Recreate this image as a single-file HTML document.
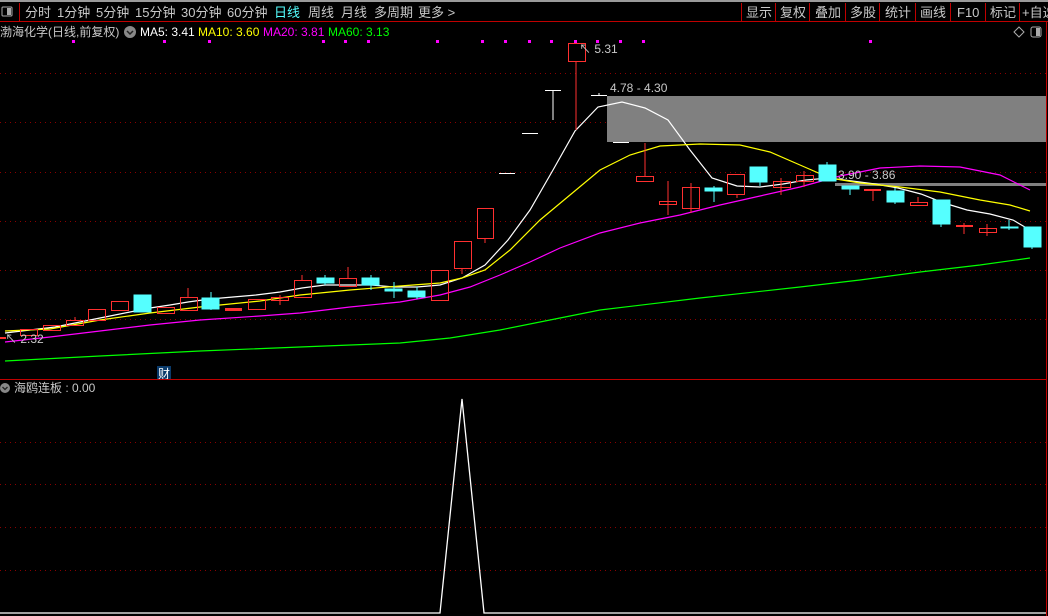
<!DOCTYPE html>
<html><head><meta charset="utf-8"><style>
html,body{margin:0;padding:0;background:#000;width:1048px;height:616px;overflow:hidden}
svg{display:block}
text{font-family:"Liberation Sans","Noto Sans CJK SC",sans-serif}
</style></head><body>
<svg width="1048" height="616" viewBox="0 0 1048 616" xmlns="http://www.w3.org/2000/svg">
<rect width="1048" height="616" fill="#000"/>
<rect x="0" y="0" width="1048" height="2" fill="#9a9a9a"/>
<line x1="0" y1="21.5" x2="1048" y2="21.5" stroke="#c00000"/>
<line x1="19.5" y1="3" x2="19.5" y2="21" stroke="#c00000"/>
<rect x="2" y="7" width="10" height="9" rx="1" fill="none" stroke="#aaa"/><rect x="7" y="8" width="4" height="7" fill="#aaa"/>
<g font-size="13" fill="#c8c8c8">
<text x="25" y="17">分时</text><text x="57" y="17">1分钟</text><text x="96" y="17">5分钟</text><text x="135" y="17">15分钟</text><text x="181" y="17">30分钟</text><text x="227" y="17">60分钟</text><text x="274" y="17" fill="#5ff">日线</text><text x="308" y="17">周线</text><text x="341" y="17">月线</text><text x="374" y="17">多周期</text><text x="418" y="17">更多 &gt;</text>
<text x="746" y="17">显示</text><text x="780" y="17">复权</text><text x="815" y="17">叠加</text><text x="850" y="17">多股</text><text x="885" y="17">统计</text><text x="920" y="17">画线</text><text x="957" y="17">F10</text><text x="990" y="17">标记</text><text x="1022" y="17">+自选</text>
</g>
<g stroke="#c00000"><line x1="741.5" y1="3" x2="741.5" y2="21"/><line x1="775.5" y1="3" x2="775.5" y2="21"/><line x1="809.5" y1="3" x2="809.5" y2="21"/><line x1="845.5" y1="3" x2="845.5" y2="21"/><line x1="879.5" y1="3" x2="879.5" y2="21"/><line x1="915.5" y1="3" x2="915.5" y2="21"/><line x1="950.5" y1="3" x2="950.5" y2="21"/><line x1="985.5" y1="3" x2="985.5" y2="21"/><line x1="1019.5" y1="3" x2="1019.5" y2="21"/><line x1="1046.5" y1="22" x2="1046.5" y2="616"/></g>
<g font-size="12">
<text x="0" y="36" fill="#c8c8c8">渤海化学(日线,前复权)</text>
<circle cx="130" cy="32" r="6" fill="#888"/><path d="M127 31l3 3 3-3" stroke="#222" stroke-width="1.5" fill="none"/>
<text x="140" y="36" fill="#fff">MA5: 3.41</text><text x="198" y="36" fill="#ff0">MA10: 3.60</text><text x="263" y="36" fill="#f0f">MA20: 3.81</text><text x="328" y="36" fill="#0f0">MA60: 3.13</text>
</g>
<path d="M1014 32l5-5 5 5-5 5z" fill="none" stroke="#aaa"/>
<rect x="1031" y="27" width="10" height="10" rx="2" fill="none" stroke="#aaa"/><rect x="1036" y="28" width="4" height="8" fill="#aaa"/>
<g fill="#f0f">
<rect x="72" y="40" width="3" height="3"/><rect x="163" y="40" width="3" height="3"/><rect x="208" y="40" width="3" height="3"/><rect x="322" y="40" width="3" height="3"/><rect x="344" y="40" width="3" height="3"/><rect x="367" y="40" width="3" height="3"/><rect x="436" y="40" width="3" height="3"/><rect x="481" y="40" width="3" height="3"/><rect x="504" y="40" width="3" height="3"/><rect x="528" y="40" width="3" height="3"/><rect x="550" y="40" width="3" height="3"/><rect x="574" y="40" width="3" height="3"/><rect x="596" y="40" width="3" height="3"/><rect x="619" y="40" width="3" height="3"/><rect x="642" y="40" width="3" height="3"/><rect x="869" y="40" width="3" height="3"/>
</g>
<g stroke="#8a0000" stroke-dasharray="1 4">
<line x1="0" y1="73.5" x2="1046" y2="73.5"/><line x1="0" y1="122.5" x2="1046" y2="122.5"/><line x1="0" y1="172.5" x2="1046" y2="172.5"/><line x1="0" y1="221.5" x2="1046" y2="221.5"/><line x1="0" y1="270.5" x2="1046" y2="270.5"/><line x1="0" y1="319.5" x2="1046" y2="319.5"/>
<line x1="0" y1="442.5" x2="1046" y2="442.5"/><line x1="0" y1="484.5" x2="1046" y2="484.5"/><line x1="0" y1="527.5" x2="1046" y2="527.5"/><line x1="0" y1="570.5" x2="1046" y2="570.5"/>
</g>
<rect x="607" y="96" width="439" height="46" fill="#808080"/>
<rect x="835" y="183" width="211" height="3" fill="#808080"/>
<g fill="none" stroke-width="1.2">
<polyline stroke="#fff" points="5,333 30,330 55,327 80,322 110,316 130,312 150,308 170,305 188,302 210,299 233,297 256,295 280,292 302,288 325,285 348,285 371,285 394,287 417,287 440,285 462,278 485,265 508,240 530,210 553,170 575,131 598,107 622,102 645,108 668,120 690,150 712,178 737,186 760,187 783,184 806,180 829,178 852,181 875,184 898,188 921,194 944,203 967,210 990,214 1013,220 1030,230"/>
<polyline stroke="#ff0" points="5,331 50,329 100,320 150,313 200,307 260,301 300,295 350,290 400,286 440,283 462,278 485,270 510,250 540,220 570,195 600,170 630,155 660,146 700,144 740,145 770,152 800,165 830,178 860,183 900,187 940,192 980,200 1010,205 1030,211"/>
<polyline stroke="#f0f" points="5,342 50,337 100,331 150,325 200,320 260,316 300,313 350,307 400,302 440,295 470,287 500,275 530,262 560,248 600,233 640,223 680,215 720,205 760,196 800,187 840,176 880,168 920,166 960,167 1000,175 1030,190"/>
<polyline stroke="#0f0" points="5,361 100,356 200,351 300,347 400,343 450,338 500,330 560,318 600,310 700,298 800,287 860,280 920,272 980,265 1030,258"/>
</g>
<g stroke="#ff3030" fill="none">
<rect x="20.5" y="329.5" width="17" height="6"/>
<rect x="43.5" y="325.5" width="17" height="5"/>
<line x1="75" y1="317" x2="75" y2="320"/><rect x="66.5" y="320.5" width="17" height="5"/>
<rect x="88.5" y="309.5" width="17" height="11"/>
<rect x="111.5" y="301.5" width="17" height="9"/>
<rect x="157.5" y="307.5" width="17" height="6"/>
<line x1="188" y1="288" x2="188" y2="297"/><rect x="180.5" y="297.5" width="17" height="13"/>
<rect x="248.5" y="299.5" width="17" height="10"/>
<line x1="280" y1="295" x2="280" y2="305"/><rect x="271.5" y="297.5" width="17" height="3"/>
<line x1="302" y1="275" x2="302" y2="280"/><rect x="294.5" y="280.5" width="17" height="17"/>
<line x1="348" y1="267" x2="348" y2="278"/><rect x="339.5" y="278.5" width="17" height="8"/>
<rect x="431.5" y="270.5" width="17" height="30"/>
<line x1="462" y1="268" x2="462" y2="274"/><rect x="454.5" y="241.5" width="17" height="27"/>
<line x1="485" y1="238" x2="485" y2="243"/><rect x="477.5" y="208.5" width="16" height="30"/>
<line x1="576" y1="61" x2="576" y2="130"/><rect x="568.5" y="43.5" width="17" height="18"/>
<line x1="645" y1="143" x2="645" y2="176"/><rect x="636.5" y="176.5" width="17" height="5"/>
<line x1="668" y1="181" x2="668" y2="215"/><rect x="659.5" y="201.5" width="17" height="3"/>
<line x1="691" y1="183" x2="691" y2="213"/><rect x="682.5" y="187.5" width="17" height="21"/>
<line x1="737" y1="194" x2="737" y2="198"/><rect x="727.5" y="174.5" width="17" height="20"/>
<line x1="781" y1="178" x2="781" y2="195"/><rect x="773.5" y="181.5" width="17" height="6"/>
<line x1="804" y1="171" x2="804" y2="187"/><rect x="796.5" y="175.5" width="17" height="6"/>
<line x1="918" y1="197" x2="918" y2="202"/><rect x="910.5" y="202.5" width="17" height="3"/>
<line x1="987" y1="224" x2="987" y2="236"/><rect x="979.5" y="228.5" width="17" height="4"/>
<line x1="873" y1="189" x2="873" y2="201"/><line x1="964" y1="223" x2="964" y2="234"/>
</g>
<g fill="#ff3030"><rect x="225" y="308" width="17" height="3"/><rect x="864" y="189" width="17" height="2"/><rect x="956" y="225" width="17" height="2"/><rect x="0" y="337" width="6" height="2"/></g>
<g fill="#55ffff" stroke="#55ffff">
<rect x="134" y="295" width="17" height="17"/>
<line x1="211" y1="292" x2="211" y2="310"/><rect x="202" y="298" width="17" height="11"/>
<line x1="325" y1="275" x2="325" y2="285"/><rect x="317" y="278" width="17" height="5"/>
<line x1="371" y1="275" x2="371" y2="290"/><rect x="362" y="278" width="17" height="7"/>
<line x1="394" y1="282" x2="394" y2="298"/><rect x="385" y="289" width="17" height="2"/>
<line x1="417" y1="287" x2="417" y2="299"/><rect x="408" y="291" width="17" height="6"/>
<line x1="714" y1="186" x2="714" y2="202"/><rect x="705" y="188" width="17" height="3"/>
<line x1="760" y1="182" x2="760" y2="186"/><rect x="750" y="167" width="17" height="15"/>
<line x1="827" y1="162" x2="827" y2="165"/><rect x="819" y="165" width="17" height="16"/>
<line x1="850" y1="189" x2="850" y2="195"/><rect x="842" y="186" width="17" height="3"/>
<line x1="895" y1="188" x2="895" y2="204"/><rect x="887" y="191" width="17" height="11"/>
<line x1="941" y1="224" x2="941" y2="227"/><rect x="933" y="200" width="17" height="24"/>
<line x1="1009" y1="220" x2="1009" y2="230"/><rect x="1001" y="227" width="17" height="1"/>
<line x1="1032" y1="247" x2="1032" y2="249"/><rect x="1024" y="227" width="17" height="20"/>
</g>
<g stroke="#fff">
<line x1="499" y1="173.5" x2="515" y2="173.5"/><line x1="522" y1="133.5" x2="538" y2="133.5"/>
<line x1="545" y1="90.5" x2="561" y2="90.5"/><line x1="553" y1="90" x2="553" y2="120"/>
<line x1="591" y1="95.5" x2="607" y2="95.5"/><line x1="599" y1="93" x2="599" y2="95"/>
<line x1="613" y1="142.5" x2="629" y2="142.5"/>
</g>
<g font-size="12" fill="#c8c8c8">
<text x="579" y="53">↖ 5.31</text><text x="610" y="92">4.78 - 4.30</text><text x="838" y="179">3.90 - 3.86</text><text x="5" y="343">↖ 2.32</text>
</g>
<rect x="157" y="366" width="14" height="14" fill="#0a3a6a"/><text x="158" y="378" font-size="12" fill="#fff">财</text>
<line x1="0" y1="379.5" x2="1046" y2="379.5" stroke="#c00000"/>
<circle cx="5" cy="388" r="5" fill="#888"/><path d="M2.5 387l2.5 2.5 2.5-2.5" stroke="#222" stroke-width="1.3" fill="none"/>
<text x="14" y="392" font-size="12" fill="#c8c8c8">海鸥连板 : 0.00</text>
<polyline fill="none" stroke="#fff" stroke-width="1.3" points="0,613 440,613 462,399 484,613 1046,613"/>
</svg>
</body></html>
